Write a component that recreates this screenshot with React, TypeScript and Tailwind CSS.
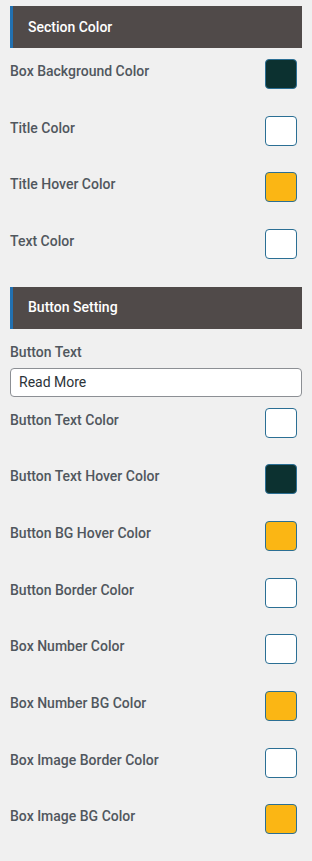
import React from 'react';

const font = { fontFamily: 'Roboto, "Liberation Sans", sans-serif' };

function SectionHeader({ title }: { title: string }) {
  return (
    <div className="h-[42px] bg-[#504a49] border-l-[3px] border-[#2271b1] flex items-center pl-[15px]">
      <span className="text-white text-[14px] font-medium">{title}</span>
    </div>
  );
}

function ColorRow({ label, color }: { label: string; color: string }) {
  return (
    <div className="h-[56.67px] flex items-start justify-between">
      <span className="mt-[13px] text-[14px] leading-5 font-medium text-[#50575e]">{label}</span>
      <div
        className="mt-[11px] mr-[5px] w-[32px] h-[30px] rounded-[4px] border border-[#2b6f94]"
        style={{ backgroundColor: color }}
      />
    </div>
  );
}

export default function App() {
  const dark = '#0c3130';
  const white = '#ffffff';
  const yellow = '#fbb614';

  return (
    <div className="min-h-screen bg-[#f0f0f0] px-[10px] pt-[6px] w-[312px]" style={font}>
      <SectionHeader title="Section Color" />
      <ColorRow label="Box Background Color" color={dark} />
      <ColorRow label="Title Color" color={white} />
      <ColorRow label="Title Hover Color" color={yellow} />
      <ColorRow label="Text Color" color={white} />

      <div className="mt-[12px]">
        <SectionHeader title="Button Setting" />
      </div>
      <div className="mt-[13px] text-[14px] leading-5 font-medium text-[#50575e]">Button Text</div>
      <div className="mt-[6px] h-[29px] bg-white border border-[#8c8f94] rounded-[4px] flex items-center px-[8px] text-[14px] text-[#2c3338]">
        Read More
      </div>
      <ColorRow label="Button Text Color" color={white} />
      <ColorRow label="Button Text Hover Color" color={dark} />
      <ColorRow label="Button BG Hover Color" color={yellow} />
      <ColorRow label="Button Border Color" color={white} />
      <ColorRow label="Box Number Color" color={white} />
      <ColorRow label="Box Number BG Color" color={yellow} />
      <ColorRow label="Box Image Border Color" color={white} />
      <ColorRow label="Box Image BG Color" color={yellow} />
    </div>
  );
}
